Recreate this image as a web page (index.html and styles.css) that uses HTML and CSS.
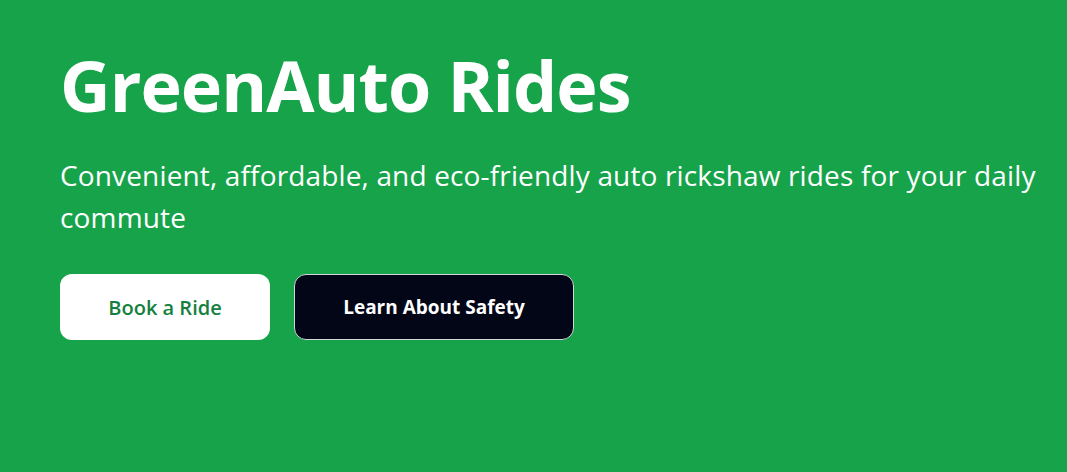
FILE: index.html
```html
<!DOCTYPE html>
<html lang="en">
<head>
<meta charset="utf-8">
<title>GreenAuto Rides</title>
<link rel="stylesheet" href="styles.css">
</head>
<body>
<section class="hero">
  <h1 class="hero-title">GreenAuto Rides</h1>
  <p class="hero-subtitle">Convenient, affordable, and eco-friendly auto rickshaw rides for your daily commute</p>
  <div class="hero-actions">
    <button class="btn btn-primary">Book a Ride</button>
    <button class="btn btn-dark">Learn About Safety</button>
  </div>
</section>
</body>
</html>
```
FILE: styles.css
```css
html, body {
  margin: 0;
  padding: 0;
  height: 100%;
}
body {
  background: #16a34a;
  font-family: "Open Sans", "Noto Sans", sans-serif;
  color: #ffffff;
}
.hero {
  padding: 40px 0 0 60px;
  box-sizing: border-box;
}
.hero-title {
  margin: 0;
  font-size: 70px;
  font-weight: 700;
  line-height: 90px;
  letter-spacing: -1px;
}
.hero-subtitle {
  margin: 24px 0 0;
  font-size: 28px;
  line-height: 42px;
  letter-spacing: 0.15px;
  max-width: 1000px;
}
.hero-actions {
  display: flex;
  gap: 24px;
  margin-top: 36px;
}
.btn {
  height: 66px;
  padding: 0 40px;
  border-radius: 12px;
  font-family: inherit;
  cursor: pointer;
}
.btn-primary {
  background: #ffffff;
  color: #15803d;
  border: none;
  font-size: 20px;
  font-weight: 600;
  width: 210px;
}
.btn-dark {
  background: #020617;
  color: #ffffff;
  border: 1px solid #d1d5db;
  font-size: 19px;
  font-weight: 700;
  width: 280px;
}
```
